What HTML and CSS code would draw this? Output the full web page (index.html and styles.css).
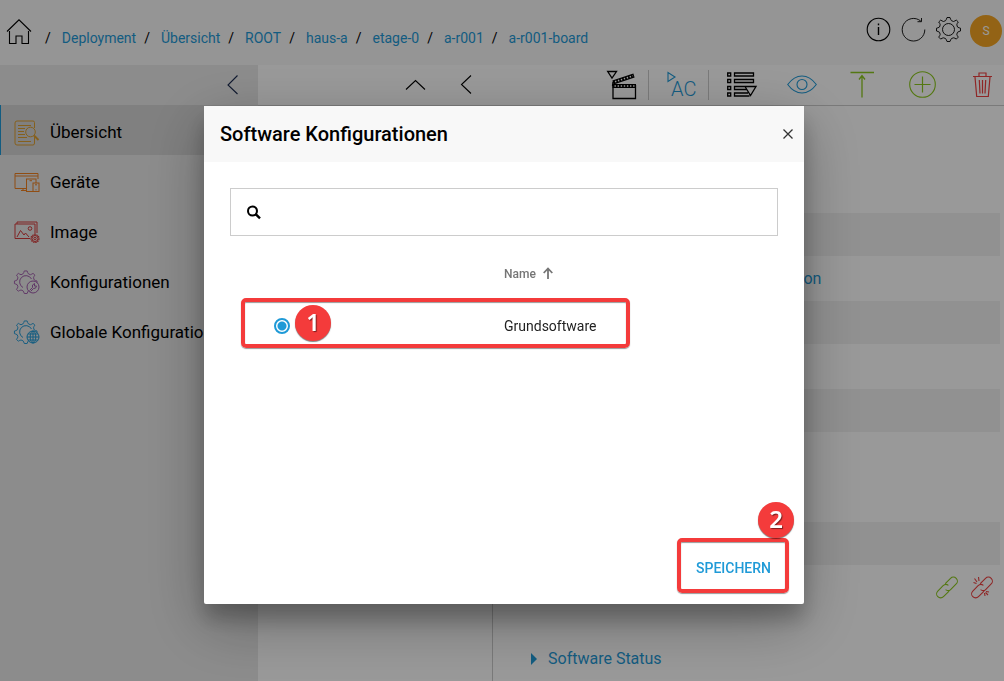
FILE: index.html
```html
<!DOCTYPE html>
<html lang="de">
<head>
  <meta charset="UTF-8">
  <meta name="viewport" content="width=device-width, initial-scale=1.0">
  <title>Software Konfigurationen</title>
  <link rel="stylesheet" href="styles.css">
</head>
<body>
  <header class="header">
    <nav class="breadcrumb" aria-label="Breadcrumb">
      <a class="home" href="#" aria-label="Home">
        <svg class="icon" viewBox="0 0 26 26"><path d="M1 12.500 13 .800 25 12.500M3.500 12V24.500H10V17H16V24.500H22.500V12"/></svg>
      </a>
      <span class="sep">/</span><a href="#">Deployment</a>
      <span class="sep">/</span><a href="#">Übersicht</a>
      <span class="sep">/</span><a href="#">ROOT</a>
      <span class="sep">/</span><a href="#">haus-a</a>
      <span class="sep">/</span><a href="#">etage-0</a>
      <span class="sep">/</span><a href="#">a-r001</a>
      <span class="sep">/</span><a href="#">a-r001-board</a>
    </nav>
    <div class="header-actions">
      <button class="icon-btn" aria-label="Info">
        <svg class="icon" viewBox="0 0 26 26"><circle cx="13.500" cy="12.500" r="11.300"/><path d="M13.500 10V18M13.500 6.500V8.200" stroke-width="1.400"/></svg>
      </button>
      <button class="icon-btn" aria-label="Aktualisieren">
        <svg class="icon thin" viewBox="0 0 26 26"><path d="M24.800 12.500A11.300 11.300 0 1 1 20.800 4.100M21.500 1V4.700H17.500"/></svg>
      </button>
      <button class="icon-btn" aria-label="Einstellungen">
        <svg class="icon thin" viewBox="0 0 26 26"><use href="#gear" x=".5" y="-.5"/><circle cx="13.500" cy="12.500" r="6"/></svg>
      </button>
      <button class="avatar" aria-label="Benutzer">S</button>
    </div>
  </header>

  <div class="layout">
    <!-- Sidebar -->
    <aside class="sidebar">
      <div class="sidebar-top">
        <button class="icon-btn collapse" aria-label="Einklappen">
          <svg class="icon" viewBox="0 0 26 26"><path d="M17.500 3.500 8 13 17.500 22"/></svg>
        </button>
      </div>
      <nav>
        <a class="nav-item active" href="#">
          <svg class="icon yellow" viewBox="0 0 26 26"><path d="M20.500 8V2.500Q20.500 1 19 1H3Q1 1 1 3V23Q1 25 3 25H19Q20.500 25 20.500 23V17M4 5.500H17M4 8.500H11M4 11.500H10M4 14.500H11M4 17.500H13M4 21.500H17"/><circle cx="16.500" cy="12" r="4.800"/><path d="M20 15.500 24.500 20" stroke-width="2"/></svg>
          <span>Übersicht</span>
        </a>
        <a class="nav-item" href="#">
          <svg class="icon orange" viewBox="0 0 26 26"><path d="M12 18.500H1V3.500H24V9M1 6H24M7 20.500H12M9 18.500V20.500"/><rect x="12.500" y="9" width="9.500" height="12.500"/><rect x="19" y="13" width="6" height="8.500" fill="#e9e9e9"/><path d="M15.500 10.700H18M21 14.800H23M21.500 19.800H22.500"/></svg>
          <span>Geräte</span>
        </a>
        <a class="nav-item" href="#">
          <svg class="icon darkred" viewBox="0 0 26 26"><path d="M16 18.500H1V4H21V14M3 4V2H23V13M3 17 6.500 10.500 10 15 11.500 13 15 17"/><circle cx="16" cy="8.500" r="1.800"/><circle cx="21" cy="18.500" r="4" stroke-dasharray="1.500 .7" stroke-width="1.200"/><circle cx="21" cy="18.500" r="3"/><circle cx="21" cy="18.500" r="1.200"/></svg>
          <span>Image</span>
        </a>
        <a class="nav-item" href="#">
          <svg class="icon purple" viewBox="0 0 26 26"><use href="#gear" transform="translate(-.5 0) scale(.94)"/><path d="M9 17.500A6.300 6.300 0 1 1 17.500 9"/><circle cx="19" cy="17" r="6" fill="#e9e9e9"/><path d="M15.500 20.500 18.500 17.500Q17.500 14.500 20.500 13.500V16L22.500 16Q22 19 19.500 18.500L16.500 21.500"/></svg>
          <span>Konfigurationen</span>
        </a>
        <a class="nav-item" href="#">
          <svg class="icon blue" viewBox="0 0 26 26"><use href="#gear" transform="translate(-.5 0) scale(.94)"/><path d="M9 17.500A6.300 6.300 0 1 1 17.500 9"/><circle cx="19" cy="17" r="6" fill="#e9e9e9"/><ellipse cx="19" cy="17" rx="2.800" ry="6"/><path d="M19 11V23M13 17H25M14 14H24M14 20H24"/></svg>
          <span>Globale Konfigurationen</span>
        </a>
      </nav>
    </aside>

    <main class="main">
      <!-- Toolbar -->
      <div class="toolbar">
        <div class="toolbar-nav">
          <button class="icon-btn" aria-label="Nach oben"><svg class="icon" viewBox="0 0 26 26"><path d="M4 17.500 13.500 8.500 23 17.500"/></svg></button>
          <button class="icon-btn" aria-label="Zurück"><svg class="icon" viewBox="0 0 26 26"><path d="M18 3.500 8.500 12.500 18 21.500"/></svg></button>
        </div>
        <div class="tools">
          <button class="tool divided" aria-label="Szene">
            <svg class="icon" viewBox="0 0 30 30"><path d="M.7 1.500H9.500L5 8Z" stroke-width="1.300"/><path d="M6 15V28.500H28.500V15M6 12 5.500 16" stroke-width="1.300"/><path d="M6 12.500 27 5.500" stroke-width="4"/><path d="M8 11.800 26 5.800" stroke="#fff" stroke-width="1.600" stroke-dasharray="1.400 1.700"/><path d="M5.500 16H29" stroke-width="4"/><path d="M7.500 16H28" stroke="#fff" stroke-width="1.600" stroke-dasharray="1.400 1.700"/></svg>
          </button>
          <button class="tool divided" aria-label="AC starten">
            <svg class="icon blue" viewBox="0 0 30 30"><path d="M1 2.500V11.500L8 7Z"/><text x="4" y="26" class="icon-text">AC</text></svg>
          </button>
          <button class="tool" aria-label="Liste">
            <svg class="icon" viewBox="0 0 30 30"><path d="M.7 3H3.700V6H.7ZM.7 9.500H3.700V12.500H.7ZM.7 16.500H3.700V19.500H.7ZM.7 23H3.700V26H.7ZM7.500 3H26.500V6H7.500ZM7.500 9.500H26.500V12.500H7.500ZM18 16.500H7.500V19.500H19.500M21 23H7.500V26H22.500M18 16.500H29L23.500 25.500Z" stroke-width="1.300"/></svg>
          </button>
          <button class="tool" aria-label="Anzeigen">
            <svg class="icon blue" viewBox="0 0 30 30"><path d="M.7 14.500Q7 6 15 6T29.300 14.500Q23 23 15 23T.7 14.500Z"/><circle cx="15" cy="14.500" r="5"/></svg>
          </button>
          <button class="tool" aria-label="Hochladen">
            <svg class="icon green" viewBox="0 0 30 30"><path d="M3.500 2.500H27M15 27.500V6M12 9.500 15 5.500 18 9.500" stroke-width="1.300"/></svg>
          </button>
          <button class="tool" aria-label="Hinzufügen">
            <svg class="icon green" viewBox="0 0 30 30"><circle cx="15.500" cy="14.500" r="12.800"/><path d="M15.500 6.500V22.500M7.500 14.500H23.500" stroke-width="1.200"/></svg>
          </button>
          <button class="tool" aria-label="Löschen">
            <svg class="icon red" viewBox="0 0 30 30"><path d="M6 6.500H25M12 6.500V3H19V6.500M8 7 9.700 26.500H21.300L23 7M12.300 10 13 23.500M15.500 10V23.500M18.700 10 18 23.500" stroke-width="1.200"/></svg>
          </button>
        </div>
      </div>

      <div class="columns">
        <div class="tree"></div>
        <section class="details">
          <h3 class="section-title">Allgemein</h3>
          <div class="row shaded"></div>
          <div class="row"><span class="row-label"></span><a href="#">Konfiguration</a></div>
          <div class="row shaded"></div>
          <div class="row"></div>
          <div class="row shaded"></div>
          <h3 class="section-title">Hardware</h3>
          <div class="row shaded"></div>
          <div class="row actions">
            <button class="icon-btn" aria-label="Verknüpfen">
              <svg class="icon green" viewBox="0 0 26 26"><use href="#link"/></svg>
            </button>
            <button class="icon-btn" aria-label="Verknüpfung lösen">
              <svg class="icon red" viewBox="0 0 26 26"><use href="#link"/><path d="M9.500 2 10 6M5.500 3.500 8 7M4.500 7.500 7.500 8.500M15.500 18 16 21M17 16.500 20 17M16.500 17.500 19 20"/></svg>
            </button>
          </div>
          <h3 class="section-title">Software Status</h3>
        </section>
      </div>
    </main>
  </div>

  <!-- Dialog -->
  <div class="overlay">
    <form class="dialog" role="dialog" aria-labelledby="dialog-title">
      <div class="dialog-header">
        <h2 id="dialog-title">Software Konfigurationen</h2>
        <button class="close" type="button" aria-label="Schließen">
          <svg class="icon" viewBox="0 0 12 12"><path d="M1.500 1.500 10.500 10.500M10.500 1.500 1.500 10.500" stroke-width="1.300"/></svg>
        </button>
      </div>
      <div class="dialog-body">
        <label class="search">
          <svg class="icon" viewBox="0 0 14 14"><circle cx="5.500" cy="6" r="4.500" stroke-width="2"/><path d="M8.700 9.200 13 13.300" stroke-width="2.400"/></svg>
          <input type="text" aria-label="Suche">
        </label>
        <table class="configs">
          <thead>
            <tr>
              <th></th>
              <th>Name
                <svg class="icon" viewBox="0 0 12 12"><path d="M5 12V1.500M.7 6 5 1.500 9.300 6" stroke-width="1.800"/></svg>
              </th>
            </tr>
          </thead>
          <tbody>
            <tr>
              <td><input type="radio" name="config" id="grundsoftware" checked></td>
              <td><label for="grundsoftware">Grundsoftware</label></td>
            </tr>
          </tbody>
        </table>
      </div>
      <div class="dialog-footer">
        <button class="save" type="button">SPEICHERN</button>
      </div>

      <!-- Step markers -->
      <div class="marker marker-row"></div>
      <div class="step step-row">1</div>
      <div class="marker marker-save"></div>
      <div class="step step-save">2</div>
    </form>
  </div>

  <svg class="sprite" aria-hidden="true">
    <defs>
      <path id="gear" d="M11.500 1H14.500Q15 3 16 4.200L18 5Q19.500 4.500 20.800 3.600L22.800 5.500Q21.500 7 21.300 8.300L22 10.500Q23.500 11.500 25 11.700V14.500Q23.500 14.800 22 15.800L21.300 17.800Q21.500 19 22.800 20.600L20.800 22.600Q19.500 21.500 18 21.300L16 22Q15 23.300 14.500 25H11.500Q11 23.300 10 22L8 21.300Q6.500 21.500 5.200 22.600L3.200 20.600Q4.500 19 4.700 17.800L4 15.800Q2.500 14.800 1 14.500V11.700Q2.500 11.500 4 10.500L4.700 8.300Q4.500 7 3.200 5.500L5.200 3.600Q6.500 4.500 8 5L10 4.200Q11 3 11.500 1Z"/>
      <path id="link" transform="rotate(-45 13 12.500)" d="M14.500 8.500H22A4 4 0 0 1 22 16.500H14.500A4 4 0 0 1 10.500 13M12 16.500H4A4 4 0 0 1 4 8.500H11.500A4 4 0 0 1 15.500 12"/>
    </defs>
  </svg>
</body>
</html>
```

FILE: styles.css
```css
* {
  margin: 0;
  padding: 0;
  box-sizing: border-box;
}

body {
  min-height: 100vh;
  display: flex;
  flex-direction: column;
  font-family: Roboto, sans-serif;
  font-size: 14px;
  color: #000;
  background: #fff;
  overflow: hidden;
}

a {
  color: #1f9ad7;
  text-decoration: none;
}

button {
  font: inherit;
  color: inherit;
  border: none;
  background: transparent;
  cursor: pointer;
}

.icon {
  display: block;
  width: 26px;
  height: 26px;
  flex: none;
  overflow: visible;
  fill: none;
  stroke: currentColor;
  stroke-width: 1.1;
}

.icon.thin {
  stroke-width: 0.9;
}

.icon-text {
  font-size: 20px;
  font-weight: 300;
  fill: currentColor;
  stroke: none;
}

.sprite {
  display: none;
}

.blue { color: #1f9ad7; }
.green { color: #8cc81e; }
.red { color: #ee4040; }
.darkred { color: #d63a3a; }
.yellow { color: #e0a030; }
.orange { color: #f08020; }
.purple { color: #a05cac; }

/* Header */
.header {
  display: flex;
  justify-content: space-between;
  height: 65px;
  padding: 15px 2px 0 6px;
  background: #f8f8f8;
}

.breadcrumb {
  display: flex;
  align-items: center;
  height: 46px;
}

.home {
  color: #000;
  margin: 0 13px 12px 0;
}

.sep {
  margin-right: 11px;
}

.breadcrumb a + .sep {
  margin-left: 8px;
}

.breadcrumb .home + .sep {
  margin-left: 0;
}

.header-actions {
  display: flex;
  gap: 9px;
  height: 32px;
}

.header-actions .icon-btn {
  height: 30px;
}

.avatar {
  width: 32px;
  height: 32px;
  border-radius: 50%;
  background: #f5a623;
  color: #fff;
  font-size: 12px;
}

/* Sidebar */
.layout {
  flex: 1;
  display: flex;
}

.sidebar {
  width: 258px;
  flex: none;
  background: #e9e9e9;
}

.sidebar-top {
  display: flex;
  justify-content: flex-end;
  align-items: center;
  height: 40px;
  padding-right: 12px;
}

.collapse {
  color: #1c2c50;
}

.nav-item {
  display: flex;
  align-items: center;
  gap: 10px;
  height: 50px;
  padding: 4px 0 0 13px;
  border-left: 1px solid transparent;
  color: #000;
  font-size: 17px;
}

.nav-item .icon {
  margin-top: 2px;
  stroke-width: 1;
}

.nav-item.active {
  border-left-color: #1f9ad7;
  background: #d5d5d5;
}

/* Toolbar */
.main {
  flex: 1;
  display: flex;
  flex-direction: column;
}

.toolbar {
  display: flex;
  justify-content: space-between;
  height: 41px;
  border-bottom: 1px solid #ccc;
}

.toolbar-nav {
  display: flex;
  align-items: center;
  gap: 25px;
  padding-left: 144px;
}

.tools {
  display: flex;
  align-items: center;
}

.tool {
  width: 60px;
  padding-left: 18px;
}

.tool .icon {
  width: 30px;
  height: 30px;
}

.tool.divided {
  border-right: 1px solid #ccc;
}

.tool:last-child {
  width: auto;
  padding-right: 7px;
}

/* Details */
.columns {
  flex: 1;
  display: flex;
}

.tree {
  width: 235px;
  border-right: 1px solid #ccc;
}

.details {
  flex: 1;
  padding: 18px 4px 0 38px;
}

.section-title {
  display: flex;
  align-items: center;
  gap: 11px;
  padding: 37px 0 28px;
  line-height: 24px;
  font-size: 16px;
  font-weight: 400;
  color: #1f9ad7;
}

.section-title::before {
  content: "";
  border-left: 6px solid currentColor;
  border-top: 6px solid transparent;
  border-bottom: 6px solid transparent;
}

.row {
  display: flex;
  align-items: center;
  height: 43px;
  margin-bottom: 1px;
  font-size: 16px;
}

.row.shaded {
  background: #f2f2f2;
}

.row-label {
  width: 195px;
}

.row.actions {
  justify-content: flex-end;
  gap: 9px;
  padding-right: 5px;
}

/* Dialog */
.overlay {
  position: fixed;
  inset: 0;
  display: flex;
  justify-content: center;
  align-items: flex-start;
  padding: 106px 0 0 4px;
  background: rgba(0, 0, 0, 0.4);
}

.dialog {
  position: relative;
  display: flex;
  flex-direction: column;
  width: 600px;
  min-height: 498px;
  background: #fff;
  border-radius: 2px;
  box-shadow: 0 19px 60px rgba(0, 0, 0, 0.3), 0 15px 20px rgba(0, 0, 0, 0.22);
}

.dialog-header {
  display: flex;
  align-items: center;
  justify-content: space-between;
  height: 56px;
  padding: 0 10px 0 16px;
  background: #f8f8f8;
}

.dialog-header h2 {
  font-size: 20px;
  font-weight: 500;
}

.close {
  color: #333;
}

.close .icon {
  width: 12px;
  height: 12px;
}

.dialog-body {
  flex: 1;
  padding: 26px;
}

.search {
  display: flex;
  align-items: center;
  gap: 10px;
  height: 48px;
  padding: 0 16px;
  border: 1px solid #ccc;
}

.search .icon {
  width: 14px;
  height: 14px;
}

.search input {
  flex: 1;
  border: none;
  outline: none;
  font: inherit;
}

.configs {
  width: 100%;
  margin-top: 12px;
  border-collapse: collapse;
  table-layout: fixed;
  color: #222;
}

.configs th {
  height: 52px;
  text-align: left;
  font-size: 12px;
  font-weight: 500;
  color: #757575;
}

.configs th .icon {
  display: inline-block;
  width: 12px;
  height: 12px;
  margin-left: 4px;
  vertical-align: -1px;
}

.configs td {
  height: 52px;
}

.configs input {
  display: block;
  appearance: none;
  width: 16px;
  height: 16px;
  margin-left: 44px;
  border: 2px solid #1f9ad7;
  border-radius: 50%;
  background: radial-gradient(circle, #1f9ad7 4px, #fff 5px);
}

.dialog-footer {
  display: flex;
  justify-content: flex-end;
  padding: 0 25px 18px;
}

.save {
  padding: 0 8px;
  line-height: 36px;
  font-weight: 500;
  color: #1f9ad7;
}

.marker {
  position: absolute;
  border: 4px solid #f43b3b;
  border-radius: 5px;
  box-shadow: 0 1px 1px rgba(0, 0, 0, 0.4), inset 0 1px 1px rgba(0, 0, 0, 0.4);
  pointer-events: none;
}

.marker-row {
  top: 192px;
  left: 37px;
  width: 389px;
  height: 50px;
}

.marker-save {
  right: 15px;
  bottom: 11px;
  width: 112px;
  height: 55px;
}

.step {
  position: absolute;
  width: 36px;
  height: 36px;
  border-radius: 50%;
  background: #f43b3b;
  box-shadow: 0 1px 1px rgba(0, 0, 0, 0.5);
  color: #fff;
  font-family: "Noto Sans", sans-serif;
  font-size: 24px;
  font-weight: 600;
  line-height: 34px;
  text-align: center;
  text-shadow: 1px 1px 1px rgba(0, 0, 0, 0.5);
}

.step-row {
  top: 199px;
  left: 91px;
}

.step-save {
  right: 10px;
  bottom: 66px;
}
```
